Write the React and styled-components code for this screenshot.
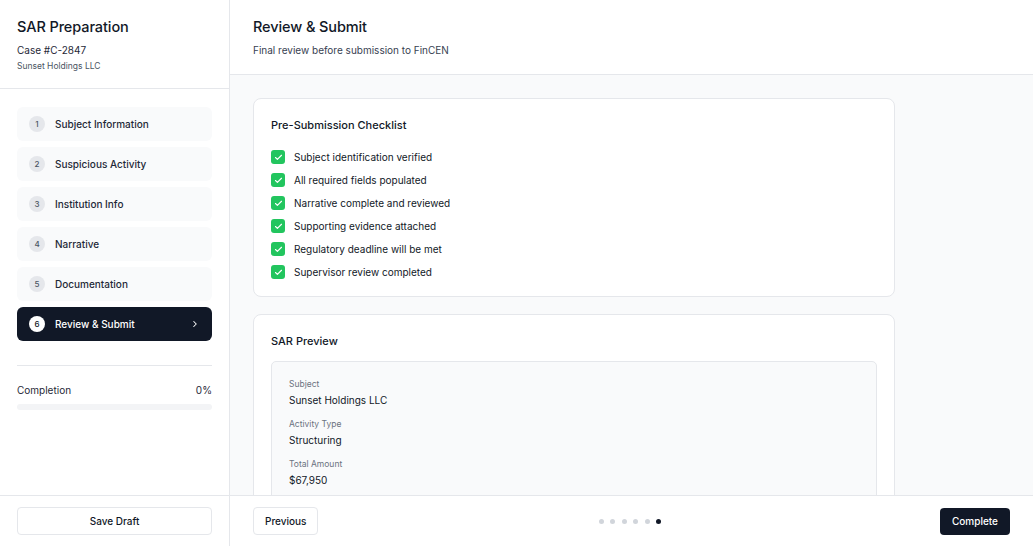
import styled, { createGlobalStyle } from 'styled-components'

const GlobalStyle = createGlobalStyle`
  * { box-sizing: border-box; }
  html, body, #root { margin: 0; height: 100%; }
  body {
    font-family: Inter, "Noto Sans", "Liberation Sans", sans-serif;
    color: #111827;
    background: #ffffff;
  }
`;

const Shell = styled.div`
  display: flex;
  height: 100vh;
  overflow: hidden;
`;

const Sidebar = styled.aside`
  width: 230px;
  flex-shrink: 0;
  display: flex;
  flex-direction: column;
  border-right: 1px solid #e5e7eb;
  background: #fff;
`;

const SideHead = styled.div`
  height: 89px;
  padding: 18px 17px 0;
  border-bottom: 1px solid #e5e7eb;
`;

const Title = styled.h1`
  margin: 0;
  font-size: 14.5px;
  font-weight: 500;
  line-height: 18px;
  letter-spacing: -0.1px;
`;

const CaseNo = styled.div`
  margin-top: 8px;
  font-size: 10px;
  color: #1f2937;
  line-height: 13px;
`;

const Company = styled.div`
  margin-top: 4px;
  font-size: 8.5px;
  color: #4b5563;
  line-height: 11px;
`;

const Nav = styled.nav`
  flex: 1;
  padding: 18px 17px 0;
  display: flex;
  flex-direction: column;
`;

const Steps = styled.div`
  display: flex;
  flex-direction: column;
  gap: 6px;
`;

const Step = styled.div`
  height: 34px;
  border-radius: 6px;
  display: flex;
  align-items: center;
  padding: 0 12px;
  gap: 10px;
  background: ${p => (p.$active ? '#111827' : '#f9fafb')};
  color: ${p => (p.$active ? '#fff' : '#1f2937')};
  font-size: 10px;
  font-weight: 500;
`;

const StepNum = styled.span`
  width: 16px;
  height: 16px;
  border-radius: 50%;
  display: flex;
  align-items: center;
  justify-content: center;
  font-size: 8px;
  font-weight: 500;
  background: ${p => (p.$active ? '#fff' : '#e5e7eb')};
  color: ${p => (p.$active ? '#111827' : '#4b5563')};
`;

const StepLabel = styled.span`
  flex: 1;
`;

const Divider = styled.div`
  height: 1px;
  background: #e5e7eb;
  margin-top: 24px;
`;

const CompletionRow = styled.div`
  display: flex;
  justify-content: space-between;
  margin-top: 18px;
  font-size: 10px;
  color: #1f2937;
`;

const Track = styled.div`
  margin-top: 8px;
  height: 6px;
  border-radius: 3px;
  background: #f3f4f6;
`;

const Footer = styled.div`
  height: 51px;
  flex-shrink: 0;
  border-top: 1px solid #e5e7eb;
  display: flex;
  align-items: center;
  padding: 0 17px;
  background: #fff;
`;

const MainFooter = styled(Footer)`
  padding: 0 23px;
  justify-content: space-between;
`;

const OutlineButton = styled.button`
  height: 28px;
  padding: 0 11px;
  border: 1px solid #e5e7eb;
  border-radius: 4px;
  background: #fff;
  font-family: inherit;
  font-size: 10px;
  font-weight: 500;
  color: #111827;
  width: ${p => (p.$full ? '100%' : 'auto')};
`;

const DarkButton = styled.button`
  height: 27px;
  padding: 0 12px;
  border: none;
  border-radius: 4px;
  background: #111827;
  color: #fff;
  font-family: inherit;
  font-size: 10px;
  font-weight: 500;
`;

const Dots = styled.div`
  display: flex;
  gap: 6.5px;
  margin-left: 2px;
`;

const Dot = styled.span`
  width: 5px;
  height: 5px;
  border-radius: 50%;
  background: ${p => (p.$active ? '#111827' : '#d1d5db')};
`;

const Main = styled.main`
  flex: 1;
  display: flex;
  flex-direction: column;
  min-width: 0;
`;

const MainHead = styled.div`
  height: 75px;
  flex-shrink: 0;
  padding: 18px 23px 0;
  border-bottom: 1px solid #e5e7eb;
`;

const Sub = styled.div`
  margin-top: 8px;
  font-size: 10px;
  color: #374151;
`;

const Content = styled.div`
  flex: 1;
  overflow: hidden;
  background: #f9fafb;
  padding: 23px 138px 0 23px;
  display: flex;
  flex-direction: column;
  gap: 17px;
`;

const Card = styled.section`
  background: #fff;
  border: 1px solid #e5e7eb;
  border-radius: 8px;
  padding: 19px 17px 17px;
  flex-shrink: 0;
`;

const CardTitle = styled.h2`
  margin: 0 0 ${p => p.$gap || 18}px;
  font-size: 11px;
  font-weight: 500;
  line-height: 14px;
`;

const Checklist = styled.ul`
  list-style: none;
  margin: 0;
  padding: 0;
  display: flex;
  flex-direction: column;
  gap: 9px;
`;

const CheckItem = styled.li`
  display: flex;
  align-items: center;
  gap: 9px;
  font-size: 10px;
  color: #111827;
  height: 14px;
`;

const Box = styled.span`
  width: 14px;
  height: 14px;
  border-radius: 3px;
  background: #22c55e;
  display: flex;
  align-items: center;
  justify-content: center;
`;

const Preview = styled.div`
  background: #f9fafb;
  border: 1px solid #e5e7eb;
  border-radius: 5px;
  padding: 17px 17px 30px;
  display: flex;
  flex-direction: column;
  gap: 12px;
`;

const Field = styled.div`
  display: flex;
  flex-direction: column;
  gap: 4px;
`;

const FieldLabel = styled.div`
  font-size: 8.5px;
  color: #6b7280;
  line-height: 11px;
`;

const FieldValue = styled.div`
  font-size: 10px;
  color: #111827;
  line-height: 13px;
`;

const steps = [
  'Subject Information',
  'Suspicious Activity',
  'Institution Info',
  'Narrative',
  'Documentation',
  'Review & Submit',
];

const checks = [
  'Subject identification verified',
  'All required fields populated',
  'Narrative complete and reviewed',
  'Supporting evidence attached',
  'Regulatory deadline will be met',
  'Supervisor review completed',
];

const fields = [
  ['Subject', 'Sunset Holdings LLC'],
  ['Activity Type', 'Structuring'],
  ['Total Amount', '$67,950'],
];

const Check = () => (
  <svg width="9" height="9" viewBox="0 0 24 24" fill="none" stroke="#fff" strokeWidth="3" strokeLinecap="round" strokeLinejoin="round">
    <path d="M20 6 9 17l-5-5" />
  </svg>
)

const Chevron = () => (
  <svg width="10" height="10" viewBox="0 0 24 24" fill="none" stroke="#fff" strokeWidth="2.5" strokeLinecap="round" strokeLinejoin="round">
    <path d="m9 18 6-6-6-6" />
  </svg>
)

export default function App() {
  return (
    <>
      <GlobalStyle />
      <Shell>
        <Sidebar>
          <SideHead>
            <Title>SAR Preparation</Title>
            <CaseNo>Case #C-2847</CaseNo>
            <Company>Sunset Holdings LLC</Company>
          </SideHead>
          <Nav>
            <Steps>
              {steps.map((s, i) => {
                const active = i === steps.length - 1
                return (
                  <Step key={s} $active={active}>
                    <StepNum $active={active}>{i + 1}</StepNum>
                    <StepLabel>{s}</StepLabel>
                    {active && <Chevron />}
                  </Step>
                )
              })}
            </Steps>
            <Divider />
            <CompletionRow>
              <span>Completion</span>
              <span>0%</span>
            </CompletionRow>
            <Track />
          </Nav>
          <Footer>
            <OutlineButton $full>Save Draft</OutlineButton>
          </Footer>
        </Sidebar>
        <Main>
          <MainHead>
            <Title>Review &amp; Submit</Title>
            <Sub>Final review before submission to FinCEN</Sub>
          </MainHead>
          <Content>
            <Card>
              <CardTitle>Pre-Submission Checklist</CardTitle>
              <Checklist>
                {checks.map(c => (
                  <CheckItem key={c}>
                    <Box><Check /></Box>
                    {c}
                  </CheckItem>
                ))}
              </Checklist>
            </Card>
            <Card>
              <CardTitle $gap={13}>SAR Preview</CardTitle>
              <Preview>
                {fields.map(([l, v]) => (
                  <Field key={l}>
                    <FieldLabel>{l}</FieldLabel>
                    <FieldValue>{v}</FieldValue>
                  </Field>
                ))}
              </Preview>
            </Card>
          </Content>
          <MainFooter>
            <OutlineButton>Previous</OutlineButton>
            <Dots>
              {steps.map((s, i) => <Dot key={s} $active={i === steps.length - 1} />)}
            </Dots>
            <DarkButton>Complete</DarkButton>
          </MainFooter>
        </Main>
      </Shell>
    </>
  )
}
